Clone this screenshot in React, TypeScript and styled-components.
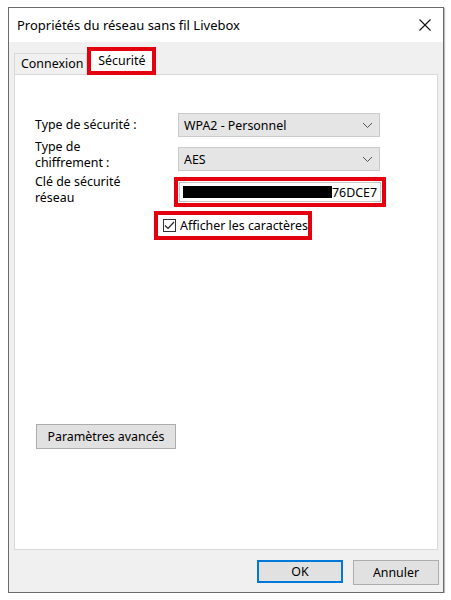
import React from "react";
import styled, { createGlobalStyle } from "styled-components";

const GlobalStyle = createGlobalStyle`
  html, body {
    margin: 0;
    padding: 0;
    background: #ffffff;
  }
  body {
    font-family: "Noto Sans", "Open Sans", Arial, sans-serif;
    font-size: 12.4px;
    color: #000;
  }
`;

const Window = styled.div`
  margin: 7px 0 0 8px;
  width: 436px;
  height: 586px;
  box-sizing: border-box;
  border: 1px solid #6b6b6b;
  box-shadow: 1px 1px 1px rgba(0, 0, 0, 0.25);
  background: #f0f0f0;
  display: flex;
  flex-direction: column;
`;

const TitleBar = styled.div`
  height: 34px;
  flex-shrink: 0;
  background: #ffffff;
  display: flex;
  align-items: center;
  justify-content: space-between;
  padding: 0 8px 0 8px;
  font-size: 13px;
`;

const CloseBtn = styled.div`
  width: 20px;
  height: 20px;
  display: flex;
  align-items: center;
  justify-content: center;
`;

const Client = styled.div`
  flex: 1;
  display: flex;
  flex-direction: column;
  padding: 5px 5px 7px 5px;
  min-height: 0;
`;

const TabStrip = styled.div`
  display: flex;
  align-items: flex-end;
  height: 28px;
  margin-bottom: -1px;
  position: relative;
  z-index: 1;
`;

const Tab = styled.div<{ $active?: boolean }>`
  height: ${(p) => (p.$active ? "20px" : "21px")};
  box-sizing: border-box;
  display: flex;
  align-items: center;
  padding: ${(p) => (p.$active ? "0 0 2px 7px" : "0 3px 2px 6px")};
  width: ${(p) => (p.$active ? "61px" : "auto")};
  margin-bottom: ${(p) => (p.$active ? "0" : "1px")};
  background: ${(p) => (p.$active ? "#ffffff" : "#f0f0f0")};
  border: ${(p) => (p.$active ? "none" : "1px solid #d9d9d9")};
  border-bottom: none;
`;

const Mark = styled.div<{ $offset?: number }>`
  display: inline-flex;
  align-items: center;
  border: 4px solid #e3000f;
  margin-left: ${(p) => p.$offset ?? 0}px;
  background: #ffffff;
`;

const Panel = styled.div`
  flex: 1;
  background: #ffffff;
  border: 1px solid #d9d9d9;
  padding: 38px 0 0 20px;
  display: flex;
  flex-direction: column;
`;

const FormRow = styled.div<{ $gap?: number }>`
  display: flex;
  align-items: flex-start;
  margin-top: ${(p) => p.$gap ?? 0}px;
`;

const Label = styled.div<{ $shift?: number }>`
  width: 143px;
  flex-shrink: 0;
  line-height: 16px;
  margin-top: ${(p) => p.$shift ?? 0}px;
`;

const Select = styled.div`
  width: 202px;
  height: 24px;
  box-sizing: border-box;
  background: #e5e5e5;
  border: 1px solid #cacaca;
  display: flex;
  align-items: center;
  justify-content: space-between;
  padding: 0 6px 0 5px;
`;

const KeyInput = styled.div`
  width: 202px;
  height: 20px;
  margin: 1px;
  box-sizing: border-box;
  border: 1px solid #c8c8c8;
  background: #ffffff;
  display: flex;
  align-items: center;
  padding: 0 3px 0 3px;
`;

const Redacted = styled.div`
  width: 149px;
  height: 12px;
  background: #000000;
`;

const CheckRow = styled.div`
  display: flex;
  margin-top: 4px;
`;

const CheckMark = styled.div`
  height: 21px;
  display: flex;
  align-items: center;
  gap: 4px;
  padding-left: 5px;
`;

const Box = styled.div`
  width: 13px;
  height: 13px;
  box-sizing: border-box;
  border: 1px solid #333333;
  background: #ffffff;
  display: flex;
  align-items: center;
  justify-content: center;
`;

const Button = styled.div<{ $default?: boolean; $width: number }>`
  width: ${(p) => p.$width}px;
  height: ${(p) => (p.$default ? "23px" : "25px")};
  box-sizing: border-box;
  background: #e1e1e1;
  border: ${(p) => (p.$default ? "2px solid #0078d7" : "1px solid #adadad")};
  display: flex;
  align-items: center;
  justify-content: center;
`;

const AdvancedWrap = styled.div`
  margin-top: 184px;
  margin-left: 1px;
`;

const Footer = styled.div`
  display: flex;
  justify-content: flex-end;
  gap: 10px;
  padding-top: 10px;
  margin-right: -1px;
`;

const Chevron = () => (
  <svg width="11" height="7" viewBox="0 0 11 7">
    <polyline points="1,1 5.5,5.5 10,1" fill="none" stroke="#555" strokeWidth="1" />
  </svg>
);

const App = () => {
  return (
    <>
      <GlobalStyle />
      <Window>
        <TitleBar>
          <span>Propriétés du réseau sans fil Livebox</span>
          <CloseBtn>
            <svg width="12" height="12" viewBox="0 0 12 12">
              <line x1="0.5" y1="0.5" x2="11.5" y2="11.5" stroke="#111" strokeWidth="1.1" />
              <line x1="11.5" y1="0.5" x2="0.5" y2="11.5" stroke="#111" strokeWidth="1.1" />
            </svg>
          </CloseBtn>
        </TitleBar>
        <Client>
          <TabStrip>
            <Tab>Connexion</Tab>
            <Mark>
              <Tab $active>Sécurité</Tab>
            </Mark>
          </TabStrip>
          <Panel>
            <FormRow>
              <Label $shift={4}>Type de sécurité :</Label>
              <Select>
                <span>WPA2 - Personnel</span>
                <Chevron />
              </Select>
            </FormRow>
            <FormRow $gap={10}>
              <Label $shift={-8}>
                Type de
                <br />
                chiffrement :
              </Label>
              <Select>
                <span>AES</span>
                <Chevron />
              </Select>
            </FormRow>
            <FormRow $gap={6}>
              <Label $shift={-3}>
                Clé de sécurité
                <br />
                réseau
              </Label>
              <Mark $offset={-4}>
                <KeyInput>
                  <Redacted />
                  <span>76DCE7</span>
                </KeyInput>
              </Mark>
            </FormRow>
            <CheckRow>
              <Mark $offset={119}>
                <CheckMark>
                  <Box>
                    <svg width="11" height="9" viewBox="0 0 11 9">
                      <polyline points="1,4.5 4,7.5 10,1" fill="none" stroke="#222" strokeWidth="1.2" />
                    </svg>
                  </Box>
                  <span>Afficher les caractères</span>
                </CheckMark>
              </Mark>
            </CheckRow>
            <AdvancedWrap>
              <Button $width={140}>Paramètres avancés</Button>
            </AdvancedWrap>
          </Panel>
          <Footer>
            <Button $default $width={86}>OK</Button>
            <Button $width={86}>Annuler</Button>
          </Footer>
        </Client>
      </Window>
    </>
  );
};

export default App;
